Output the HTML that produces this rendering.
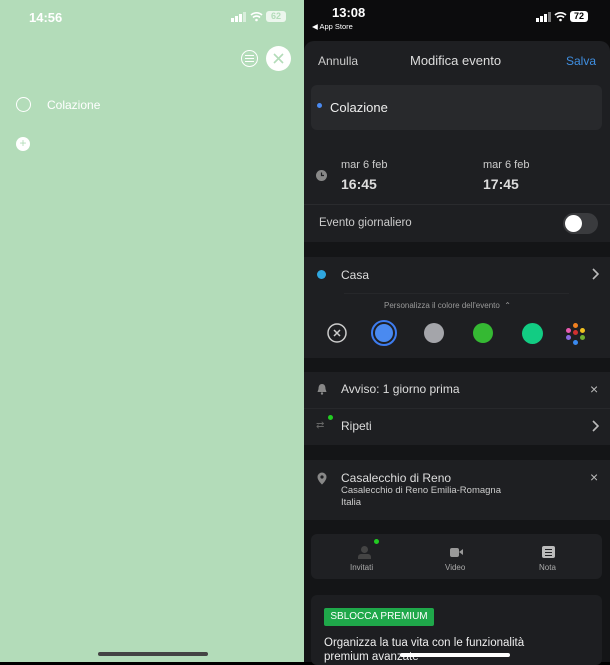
<!DOCTYPE html><html><head><meta charset="utf-8"><style>
*{margin:0;padding:0;box-sizing:border-box}
body{width:610px;height:662px;overflow:hidden;font-family:"Liberation Sans",sans-serif;position:relative;background:#000}
.l{position:absolute;left:0;top:0;width:304px;height:662px;background:#b3dcb9;color:#fff}
.r{position:absolute;left:304px;top:0;width:306px;height:662px;background:#0c0c0d;color:#e8e8ea}
.a{position:absolute}
.sec{position:absolute;left:0;width:306px;background:#1e1f22}
.gap{position:absolute;left:0;width:306px;background:#141517}
.t{position:absolute;white-space:nowrap}
.dot{position:absolute;border-radius:50%}
</style></head><body>
<div class="l">
 <div class="t" style="left:29px;top:10px;font-size:13px;font-weight:bold">14:56</div>
 <svg class="a" style="left:231px;top:12px" width="16" height="10"><rect x="0" y="6" width="3" height="4" fill="#fff"/><rect x="4" y="4" width="3" height="6" fill="#fff"/><rect x="8" y="2" width="3" height="8" fill="#fff"/><rect x="12" y="0" width="3" height="10" fill="#fff" opacity=".5"/></svg>
 <svg class="a" style="left:250px;top:11px" width="13" height="11"><path d="M1 4a8 8 0 0 1 11 0M3 6.5a5 5 0 0 1 7 0" stroke="#fff" stroke-width="1.6" fill="none"/><circle cx="6.5" cy="9" r="1.3" fill="#fff"/></svg>
 <div class="a" style="left:266px;top:11px;width:20px;height:11px;border-radius:3px;background:#fff;opacity:.75;font-size:9px;color:#b3dcb9;text-align:center;line-height:11px;font-weight:bold">62</div>
 <div class="a" style="left:241px;top:50px;width:17px;height:17px;border:1.5px solid #fff;border-radius:50%"></div>
 <div class="a" style="left:245px;top:55px;width:9px;height:1.2px;background:#fff"></div><div class="a" style="left:245px;top:58px;width:9px;height:1.2px;background:#fff"></div><div class="a" style="left:245px;top:61px;width:9px;height:1.2px;background:#fff"></div>
 <div class="a" style="left:266px;top:46px;width:25px;height:25px;border-radius:50%;background:#fff"></div>
 <svg class="a" style="left:272px;top:52px" width="13" height="13"><path d="M2 2l9 9M11 2l-9 9" stroke="#b3dcb9" stroke-width="1.6"/></svg>
 <div class="a" style="left:16px;top:97px;width:15px;height:15px;border:1.5px solid #fff;border-radius:50%"></div>
 <div class="t" style="left:47px;top:98px;font-size:12px">Colazione</div>
 <div class="a" style="left:16px;top:137px;width:14px;height:14px;border-radius:50%;background:#fff;color:#b3dcb9;font-size:12px;line-height:13px;text-align:center">+</div>
 <div class="a" style="left:98px;top:652px;width:110px;height:4px;border-radius:2px;background:#444"></div>
</div>
<div class="r">
 <div class="t" style="left:28px;top:5px;font-size:13px;font-weight:bold;color:#fff">13:08</div>
 <div class="t" style="left:8px;top:22px;font-size:7.5px;color:#fff">◀ App Store</div>
 <svg class="a" style="left:232px;top:12px" width="16" height="10"><rect x="0" y="6" width="3" height="4" fill="#fff"/><rect x="4" y="4" width="3" height="6" fill="#fff"/><rect x="8" y="2" width="3" height="8" fill="#fff"/><rect x="12" y="0" width="3" height="10" fill="#777"/></svg>
 <svg class="a" style="left:250px;top:11px" width="13" height="11"><path d="M1 4a8 8 0 0 1 11 0M3 6.5a5 5 0 0 1 7 0" stroke="#fff" stroke-width="1.6" fill="none"/><circle cx="6.5" cy="9" r="1.3" fill="#fff"/></svg>
 <div class="a" style="left:266px;top:11px;width:18px;height:11px;border-radius:3px;background:#fff;font-size:9px;color:#000;text-align:center;line-height:11px;font-weight:bold">72</div>
 <div class="sec" style="top:41px;height:201px;border-radius:10px 10px 0 0"></div>
 <div class="t" style="left:14px;top:54px;font-size:12px;color:#ccc">Annulla</div>
 <div class="t" style="left:106px;top:53px;font-size:13px;color:#ddd">Modifica evento</div>
 <div class="t" style="left:262px;top:54px;font-size:12px;color:#3f8ee0">Salva</div>
 <div class="a" style="left:7px;top:85px;width:291px;height:45px;border-radius:6px;background:#28292c"></div>
 <div class="dot" style="left:13px;top:103px;width:5px;height:5px;background:#4a8af0"></div>
 <div class="t" style="left:26px;top:100px;font-size:13px;color:#eee">Colazione</div>
 <div class="a" style="left:0;top:204px;width:306px;height:1px;background:#2a2b2e"></div>
 <svg class="a" style="left:12px;top:170px" width="11" height="11"><circle cx="5.5" cy="5.5" r="5.5" fill="#888"/><path d="M5.5 2.5v3h2.5" stroke="#1e1f22" stroke-width="1.2" fill="none"/></svg>
 <div class="t" style="left:37px;top:159px;font-size:11px;color:#ccc">mar 6 feb</div>
 <div class="t" style="left:37px;top:176px;font-size:14px;font-weight:bold;color:#ddd">16:45</div>
 <div class="t" style="left:179px;top:159px;font-size:11px;color:#ccc">mar 6 feb</div>
 <div class="t" style="left:179px;top:176px;font-size:14px;font-weight:bold;color:#ddd">17:45</div>
 <div class="t" style="left:15px;top:217px;font-size:11.5px;color:#ccc">Evento giornaliero</div>
 <div class="a" style="left:259px;top:213px;width:35px;height:21px;border-radius:11px;background:#3a3b3e"></div>
 <div class="dot" style="left:261px;top:215px;width:17px;height:17px;background:#fff"></div>
 <div class="gap" style="top:242px;height:15px"></div>
 <div class="sec" style="top:257px;height:101px"></div>
 <div class="dot" style="left:13px;top:270px;width:9px;height:9px;background:#2fa7e0"></div>
 <div class="t" style="left:37px;top:268px;font-size:12px;color:#ddd">Casa</div>
 <svg class="a" style="left:287px;top:268px" width="8" height="12"><path d="M2 1l5 5-5 5" stroke="#bbb" stroke-width="1.6" fill="none"/></svg>
 <div class="a" style="left:40px;top:293px;width:225px;height:1px;background:#26272a"></div>
 <div class="t" style="left:80px;top:301px;font-size:8px;color:#999">Personalizza il colore dell'evento &nbsp;⌃</div>
 <svg class="a" style="left:23px;top:323px" width="20" height="20"><circle cx="10" cy="10" r="9" stroke="#ccc" stroke-width="1.5" fill="none"/><path d="M7 7l6 6M13 7l-6 6" stroke="#ccc" stroke-width="1.5"/></svg>
 <div class="dot" style="left:67px;top:320px;width:26px;height:26px;border:2px solid #3d7cf0"></div>
 <div class="dot" style="left:71px;top:324px;width:18px;height:18px;background:#4a8af0"></div>
 <div class="dot" style="left:120px;top:323px;width:20px;height:20px;background:#a4a5aa"></div>
 <div class="dot" style="left:169px;top:323px;width:20px;height:20px;background:#35b933"></div>
 <div class="dot" style="left:218px;top:323px;width:21px;height:21px;background:#12cc83"></div>
 <div class="dot" style="left:269px;top:323px;width:5px;height:5px;background:#f08020"></div>
 <div class="dot" style="left:262px;top:328px;width:5px;height:5px;background:#e85ab0"></div>
 <div class="dot" style="left:276px;top:328px;width:5px;height:5px;background:#f0c020"></div>
 <div class="dot" style="left:269px;top:330px;width:5px;height:5px;background:#d03030"></div>
 <div class="dot" style="left:262px;top:335px;width:5px;height:5px;background:#8a6ae0"></div>
 <div class="dot" style="left:276px;top:335px;width:5px;height:5px;background:#70b030"></div>
 <div class="dot" style="left:269px;top:340px;width:5px;height:5px;background:#3a8af0"></div>
 <div class="gap" style="top:358px;height:14px"></div>
 <div class="sec" style="top:372px;height:73px"></div>
 <svg class="a" style="left:13px;top:383px" width="10" height="12"><path d="M5 1c-3 0-3.5 3-3.5 5L0.5 9h9L8.5 6C8.5 4 8 1 5 1z" fill="#888"/><circle cx="5" cy="10.5" r="1.2" fill="#888"/></svg>
 <div class="t" style="left:37px;top:382px;font-size:12px;color:#ddd">Avviso: 1 giorno prima</div>
 <div class="t" style="left:286px;top:381px;font-size:14px;color:#bbb">×</div>
 <div class="a" style="left:0;top:408px;width:306px;height:1px;background:#27282b"></div>
 <div class="t" style="left:12px;top:420px;font-size:10px;color:#666">⇄</div>
 <div class="dot" style="left:24px;top:415px;width:5px;height:5px;background:#2c2"></div>
 <div class="t" style="left:37px;top:419px;font-size:12px;color:#ddd">Ripeti</div>
 <svg class="a" style="left:287px;top:420px" width="8" height="12"><path d="M2 1l5 5-5 5" stroke="#bbb" stroke-width="1.6" fill="none"/></svg>
 <div class="gap" style="top:445px;height:15px"></div>
 <div class="sec" style="top:460px;height:60px"></div>
 <svg class="a" style="left:13px;top:472px" width="10" height="13"><path d="M5 0.5a4.5 4.5 0 0 0-4.5 4.5c0 3.5 4.5 7.5 4.5 7.5s4.5-4 4.5-7.5A4.5 4.5 0 0 0 5 0.5z" fill="#888"/><circle cx="5" cy="5" r="1.6" fill="#1e1f22"/></svg>
 <div class="t" style="left:37px;top:471px;font-size:12px;color:#ddd">Casalecchio di Reno</div>
 <div class="t" style="left:37px;top:485px;font-size:9.5px;color:#ccc">Casalecchio di Reno Emilia-Romagna</div>
 <div class="t" style="left:37px;top:497px;font-size:9.5px;color:#ccc">Italia</div>
 <div class="t" style="left:286px;top:469px;font-size:14px;color:#bbb">×</div>
 <div class="gap" style="top:520px;height:142px"></div>
 <div class="a" style="left:7px;top:534px;width:291px;height:45px;border-radius:6px;background:#1f2023"></div>
 <div class="dot" style="left:70px;top:539px;width:5px;height:5px;background:#2c2"></div>
 <div class="dot" style="left:57px;top:546px;width:7px;height:7px;background:#444"></div>
 <div class="a" style="left:54px;top:554px;width:13px;height:5px;border-radius:3px 3px 0 0;background:#444"></div>
 <div class="t" style="left:46px;top:563px;font-size:8px;color:#aaa">Invitati</div>
 <div class="a" style="left:146px;top:548px;width:9px;height:9px;border-radius:2px;background:#999"></div>
 <div class="a" style="left:155px;top:549px;width:0;height:0;border-top:3.5px solid transparent;border-bottom:3.5px solid transparent;border-right:4px solid #999"></div>
 <div class="t" style="left:141px;top:563px;font-size:8px;color:#aaa">Video</div>
 <div class="a" style="left:238px;top:546px;width:13px;height:12px;border-radius:2px;background:#bbb"></div>
 <div class="a" style="left:241px;top:549px;width:7px;height:1px;background:#1f2023;box-shadow:0 3px 0 #1f2023,0 6px 0 #1f2023"></div>
 <div class="t" style="left:235px;top:563px;font-size:8px;color:#aaa">Nota</div>
 <div class="a" style="left:7px;top:595px;width:291px;height:70px;border-radius:6px;background:#1d1e21"></div>
 <div class="a" style="left:20px;top:608px;width:110px;height:18px;border-radius:2px;background:#1fa84a;color:#fff;font-size:10px;line-height:18px;text-align:center">SBLOCCA PREMIUM</div>
 <div class="t" style="left:20px;top:637px;font-size:11.5px;color:#eee">Organizza la tua vita con le funzionalità</div>
 <div class="t" style="left:20px;top:651px;font-size:11.5px;color:#eee">premium avanzate</div>
 <div class="a" style="left:96px;top:653px;width:110px;height:4px;border-radius:2px;background:#fff"></div>
</div>
</body></html>
